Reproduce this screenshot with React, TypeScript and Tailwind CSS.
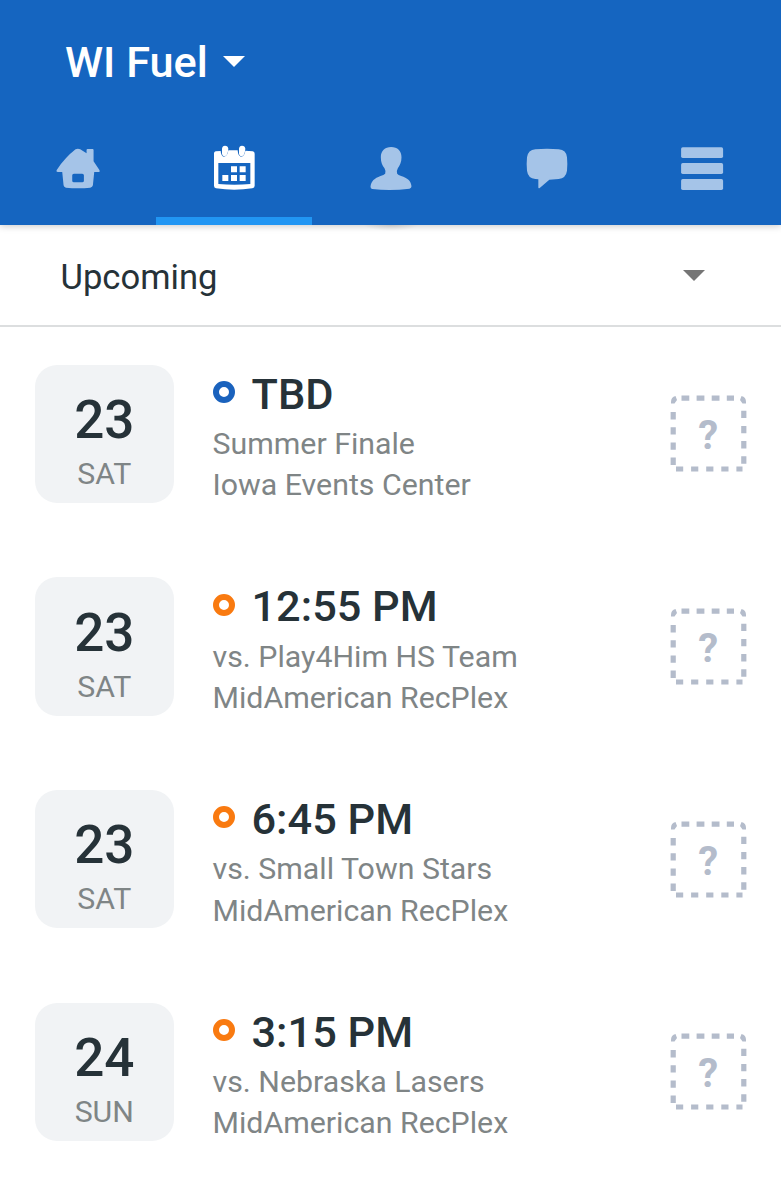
import React from "react";

type Game = {
  day: string;
  weekday: string;
  time: string;
  title: string;
  place: string;
  dot: string;
};

const games: Game[] = [
  {
    day: "23",
    weekday: "SAT",
    time: "TBD",
    title: "Summer Finale",
    place: "Iowa Events Center",
    dot: "border-[#1a62bd]",
  },
  {
    day: "23",
    weekday: "SAT",
    time: "12:55 PM",
    title: "vs. Play4Him HS Team",
    place: "MidAmerican RecPlex",
    dot: "border-[#f97a10]",
  },
  {
    day: "23",
    weekday: "SAT",
    time: "6:45 PM",
    title: "vs. Small Town Stars",
    place: "MidAmerican RecPlex",
    dot: "border-[#f97a10]",
  },
  {
    day: "24",
    weekday: "SUN",
    time: "3:15 PM",
    title: "vs. Nebraska Lasers",
    place: "MidAmerican RecPlex",
    dot: "border-[#f97a10]",
  },
];

const HomeIcon = () => (
  <svg viewBox="-5.7 0 240 240" className="size-20" fill="currentColor">
    <path
      fillRule="evenodd"
      d="M107 58Q114 54 121 58L140 70V60Q140 57 143 57H158Q161 57 161 60V94L178 119Q182 126 175 126H163L159 166Q158 172 151 173Q115 177 78 173Q72 172 71 166L67 126H54Q47 125 51 119Q76 82 107 58ZM102 131Q97 131 97 136V152Q97 157 102 157H127Q132 157 132 152V136Q132 131 127 131Z"
    />
  </svg>
);

const CalendarIcon = () => (
  <svg viewBox="-17 0 240 240" className="size-20" fill="currentColor">
    <path
      fillRule="evenodd"
      d="M48 64L63 63Q64 79 73 80Q84 79 86 61H114Q115 79 124 80Q135 79 137 62L159 64Q165 65 165 71V167Q165 174 158 175Q104 183 49 175Q43 174 43 167V70Q43 65 48 64ZM56 99V162Q104 167 152 162V99Z"
    />
    <path d="M67 72V56Q68 47 76 47Q85 47 86 56L85 64Q83 77 75 79Q68 79 67 72ZM118 72V56Q119 47 127 47Q136 47 137 56L136 64Q134 77 126 79Q119 79 118 72Z" />
    <path d="M94 109h18v18h-18zM120 109h18v18h-18zM68 135h18v18h-18zM94 135h18v18h-18zM120 135h18v18h-18z" />
  </svg>
);

const PersonIcon = () => (
  <svg viewBox="-13.5 0 240 240" className="size-20" fill="currentColor">
    <path d="M107 51C126 51 138 63 138 82C138 97 133 106 127 115Q122 124 125 131Q128 135 137 138C156 144 166 152 168 169Q168 175 162 176Q106 183 50 177Q45 176 45 170C47 153 57 145 75 138Q85 135 89 131Q92 124 87 115C80 106 76 97 76 82C76 63 88 51 107 51Z" />
  </svg>
);

const ChatIcon = () => (
  <svg viewBox="-10 0 240 240" className="size-20" fill="currentColor">
    <path d="M75 58Q110 55 145 58Q168 60 170 82Q172 102 170 122Q167 144 145 147L117 149L89 173Q84 177 84 172V148L75 147Q53 145 50 122Q48 102 50 82Q53 60 75 58Z" />
  </svg>
);

const MenuIcon = () => (
  <svg viewBox="8.7 0 240 240" className="size-20" fill="currentColor">
    <rect x="63" y="52" width="126" height="32" rx="5" />
    <rect x="63" y="99" width="126" height="33" rx="5" />
    <rect x="63" y="147" width="126" height="33" rx="5" />
  </svg>
);

const tabs = [
  { name: "home", Icon: HomeIcon },
  { name: "schedule", Icon: CalendarIcon },
  { name: "roster", Icon: PersonIcon },
  { name: "messages", Icon: ChatIcon },
  { name: "more", Icon: MenuIcon },
];

const Caret = ({ className }: { className: string }) => (
  <svg viewBox="0 0 22 11" className={className} fill="currentColor">
    <path d="M0 0h22L11 11z" />
  </svg>
);

// dashed availability box, 77x77
const Unknown = () => (
  <svg viewBox="0 0 77 77" className="size-[77px] text-[#b4bccb]">
    <g fill="none" stroke="currentColor" strokeWidth="5.2">
      <path d="M11.5 3.2H64" strokeDasharray="7.8 7.3" />
      <path d="M3.2 17V71.5" strokeDasharray="7.4 7.8" />
      <path d="M73.8 15.7V70" strokeDasharray="7.4 7.8" />
      <path d="M6 74H72.5" strokeDasharray="7.2 7.9" />
    </g>
    <g fill="currentColor">
      <path d="M1 7Q1 2 5.5 1L7 5L4.5 8.5H1Z" />
      <path d="M76 7Q76 2 71.5 1L70 5L72.5 8.5H76Z" />
      <text x="38.2" y="53.5" textAnchor="middle" className="text-[40px] font-bold">
        ?
      </text>
    </g>
  </svg>
);

const GameRow = ({ game }: { game: Game }) => (
  <li className="flex h-[138.5px] items-center">
    <div className="flex h-full w-[138.5px] flex-col items-center rounded-[22px] bg-[#f1f3f5] pt-[27.4px]">
      <span className="text-[53px] leading-14 font-medium text-[#263238]">
        {game.day}
      </span>
      <span className="mt-2 text-[30.3px] leading-9 text-[#7f8586]">
        {game.weekday}
      </span>
    </div>
    <div className="ml-[39px] h-full flex-1 pt-1.5">
      <div className="flex items-center">
        <span
          className={`mb-[5px] size-[22px] rounded-full border-[6px] ${game.dot}`}
        />
        <h2 className="ml-[17px] text-[43.3px] leading-12 font-medium text-[#263238]">
          {game.time}
        </h2>
      </div>
      <div className="mt-[4.4px] text-[30.3px] leading-[41.3px] text-[#7f8586]">
        <p>{game.title}</p>
        <p>{game.place}</p>
      </div>
    </div>
    <Unknown />
  </li>
);

const App = () => {
  return (
    <div className="h-[1200px] w-full overflow-hidden bg-white font-['Roboto',sans-serif]">
      <header className="relative z-10 flex h-[225px] flex-col justify-between bg-[#1565c0] pt-[39.4px] shadow-[0_1px_7px_rgba(0,0,0,0.22)]">
        <div className="flex items-center pl-[65px] text-white">
          <h1 className="text-[43.3px] leading-12 font-medium">WI Fuel</h1>
          <Caret className="mb-1 ml-[15px] h-[11px] w-[22px]" />
        </div>
        <nav className="flex h-[95px]">
          {tabs.map(({ name, Icon }) => (
            <button
              key={name}
              type="button"
              className={
                name === "schedule"
                  ? "flex flex-1 justify-center border-b-8 border-[#2196f3] text-white"
                  : "flex flex-1 justify-center text-[#a5c4e8]"
              }
            >
              <Icon />
            </button>
          ))}
        </nav>
        <div className="absolute top-full left-1/2 h-1.5 w-14 -translate-x-1/2 bg-radial-[ellipse_at_top] from-black/12 to-transparent to-70%" />
      </header>
      <div className="flex h-[102px] items-center justify-between border-b-2 border-[#dcdedf] pt-px pr-[76px] pl-[60.5px]">
        <span className="pt-[5px] text-[34.6px] text-[#263238]">Upcoming</span>
        <Caret className="h-[11px] w-[22px] text-[#757575]" />
      </div>
      <ul className="flex flex-col gap-[74.2px] pt-[37.5px] pr-[34px] pl-[35px]">
        {games.map((game, i) => (
          <GameRow key={i} game={game} />
        ))}
      </ul>
    </div>
  );
};

export default App;
